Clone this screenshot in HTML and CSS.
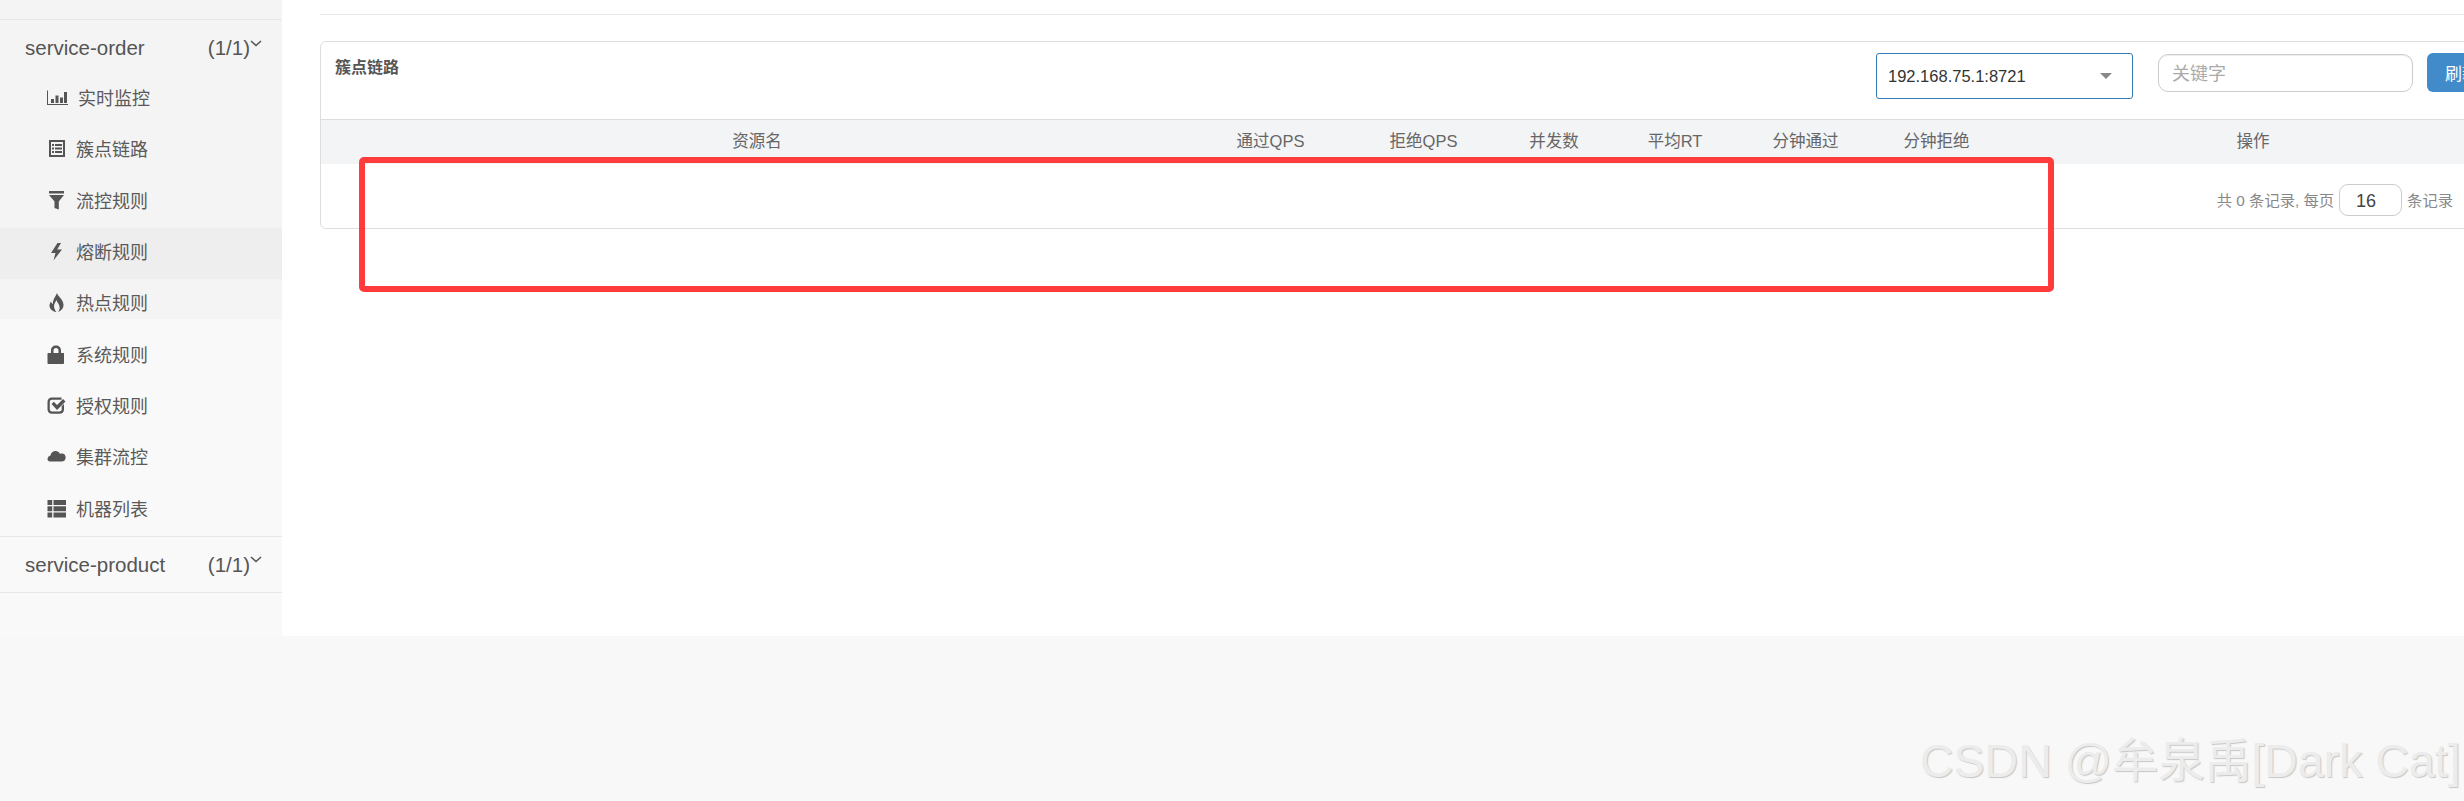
FILE: index.html
```html
<!DOCTYPE html>
<html lang="zh-CN">
<head>
<meta charset="utf-8">
<title>簇点链路</title>
<link rel="stylesheet" href="styles.css">
</head>
<body>
<div class="app">
  <aside class="sidebar">
    <div class="home"><span class="home-text">首页</span></div>
    <div class="app-head">
      <span class="app-name">service-order</span>
      <span class="app-count">(1/1)</span>
      <svg class="chev" viewBox="0 0 12 7"><path d="M1 1l5 4.5L11 1" fill="none" stroke="currentColor" stroke-width="1.6"/></svg>
    </div>
    <ul class="menu">
      <li class="row"><svg class="ico ico-wide" viewBox="0 0 21 19"><path d="M0 2.5h1V16h20v1H0z"/><path d="M4 11h3v4H4zM8.5 7.5h3V15h-3zM13 9.500h3V15h-3zM17 4h3v11h-3z"/></svg><span>实时监控</span></li>
      <li class="row"><svg class="ico" viewBox="0 0 19 19"><path fill-rule="evenodd" d="M2 1h16v17H2zM4 3v13h12V3z"/><path d="M5 5h2v2H5zM8 5h7v2H8zM5 8.500h2v2H5zM8 8.500h7v2H8zM5 12h2v2H5zM8 12h7v2H8z"/></svg><span>簇点链路</span></li>
      <li class="row"><svg class="ico" viewBox="0 0 19 19"><path d="M2 0h15v2.500H2zM2 4h15l-5.200 6.500V18.500L7.500 17V10.500z"/></svg><span>流控规则</span></li>
      <li class="row row-active"><svg class="ico" viewBox="0 0 19 19"><path d="M10.500 1L4 11h4.500L6.500 18.500 15 7.500h-4.800L14 1z"/></svg><span>熔断规则</span></li>
      <li class="row"><svg class="ico" viewBox="0 0 19 19"><path d="M10 0C10.500 3 16 6 16.500 11.500 16.800 15 14 18 11 19 13 16.500 13 14 12 12 11.500 10.500 10 9 9.500 7 8.500 9 7 11 7 13 7 15 8 17.500 9.500 19 5 18.500 2.500 15.500 2.500 12.500 2.500 10.500 3.500 9.500 4 8.500 4.500 10 5 10.500 6 11 5.500 7 8.500 3.500 10 0z"/></svg><span>热点规则</span></li>
      <li class="row"><svg class="ico" viewBox="0 0 19 19"><path fill-rule="evenodd" d="M4 8V5.500C4 2.500 6 .5 9 .5s5 2 5 5V8h2.500c.5 0 .5.300.5.800V18c0 .5-.3 1-1 1H1.500C.8 19 .500 18.500 .500 18V8.800C.5 8.300.8 8 1.300 8zM6.500 8h5V5.500C11.500 4 10.500 3 9 3S6.500 4 6.500 5.500z"/></svg><span>系统规则</span></li>
      <li class="row"><svg class="ico" viewBox="0 0 19 19"><path d="M5 1.500h9.500v2.300H5c-1.500 0-2.200.8-2.200 2.200v7.200c0 1.300.8 2.200 2.200 2.200h7.500c1.300 0 2.200-.9 2.200-2.200v-3l2.300-2.300v5.300c0 3-1.800 4.500-4.500 4.500H5c-3 0-4.500-1.800-4.500-4.500V6C.5 3 2.300 1.500 5 1.500z"/><path d="M4.500 8l2.300-2.300 3.200 3.200 6-6 2.500 2.500-8.500 8.500z"/></svg><span>授权规则</span></li>
      <li class="row"><svg class="ico" viewBox="0 0 19 19"><path d="M.5 12.500c0-2.200 1.300-3.500 3-4 .3-2.800 2.700-4.500 5-4.500 2 0 3.800 1 4.700 3 .7-.3 1-.4 1.800-.4 2 0 3.200 1.300 3.500 3 .500 1.800-.5 5-3.500 5H4c-2 0-3.500-.8-3.500-2.100z"/></svg><span>集群流控</span></li>
      <li class="row"><svg class="ico" viewBox="0 0 19 19"><path d="M.5 1h4.700v5H.5zM6.500 1h12.500v5H6.500zM.5 7.300h4.700v5H.5zM6.500 7.300h12.500v5H6.500zM.5 13.600h4.700v5H.5zM6.500 13.600h12.500v5H6.500z"/></svg><span>机器列表</span></li>
    </ul>
    <div class="app-head app-head-last">
      <span class="app-name">service-product</span>
      <span class="app-count">(1/1)</span>
      <svg class="chev" viewBox="0 0 12 7"><path d="M1 1l5 4.500L11 1" fill="none" stroke="currentColor" stroke-width="1.6"/></svg>
    </div>
  </aside>
  <main class="main">
    <div class="rule"></div>
    <section class="card">
      <header class="card-head">
        <h2 class="card-title">簇点链路</h2>
        <div class="select"><span>192.168.75.1:8721</span><i class="caret"></i></div>
        <div class="search">关键字</div>
        <button class="refresh">刷新</button>
      </header>
      <div class="thead">
        <span>资源名</span><span>通过QPS</span><span>拒绝QPS</span><span>并发数</span><span>平均RT</span><span>分钟通过</span><span>分钟拒绝</span><span>操作</span>
      </div>
      <footer class="pager">
        <span class="pager-text">共 0 条记录, 每页</span>
        <div class="page-size">16</div>
        <span class="pager-text">条记录</span>
      </footer>
    </section>
  </main>
  <div class="annot"></div>
</div>
<div class="watermark">CSDN @牟泉禹[Dark Cat]</div>
</body>
</html>
```
FILE: styles.css
```css
* { box-sizing: border-box; }
html, body { margin: 0; height: 100%; }
body {
  position: relative;
  height: 801px;
  overflow: hidden;
  background: #f8f8f8;
  color: #555;
  font-family: "Liberation Sans", "Noto Sans CJK SC", sans-serif;
}
.app { position: relative; display: flex; height: 636px; background: #fff; }

/* sidebar */
.sidebar {
  flex: 0 0 282px;
  height: 636px;
  background: linear-gradient(#f4f4f4 319px, #f9f9f9 319px);
}
.home {
  display: flex;
  align-items: flex-end;
  height: 20px;
  padding-left: 60px;
  overflow: hidden;
  border-bottom: 1px solid #e7e7e7;
}
.home-text { font-size: 18px; line-height: 24px; margin-bottom: 16px; }
.app-head {
  display: flex;
  align-items: center;
  height: 54px;
  padding: 2px 20px 0 25px;
  font-size: 20.5px;
  color: #555;
}
.app-head-last {
  height: 57px;
  padding-top: 1px;
  border-top: 1px solid #e7e7e7;
  border-bottom: 1px solid #e7e7e7;
}
.app-name { flex: 1; }
.chev { width: 12px; height: 7px; align-self: flex-start; margin-top: 18px; color: #555; }
.menu { list-style: none; margin: 0; padding: 0; }
.row {
  display: flex;
  align-items: center;
  gap: 10px;
  height: 51.33px;
  padding: 0 0 4px 47px;
  font-size: 18px;
  color: #5a5a5a;
}
.row span { margin-bottom: 1px; }
.row-active { background: #eee; }
.ico { flex: 0 0 19px; width: 19px; height: 19px; fill: #555; }
.ico-wide { flex-basis: 21px; width: 21px; }

/* main */
.main { flex: 1; min-width: 0; padding: 14px 0 0 38px; overflow: hidden; }
.rule { height: 1px; background: #e7e7e7; }
.card {
  width: 2191px;
  margin-top: 26px;
  border: 1px solid #ddd;
  border-radius: 6px;
}
.card-head { display: flex; align-items: flex-start; height: 77px; padding-right: 13px; }
.card-title {
  flex: 1;
  margin: 0;
  padding: 15px 0 0 14px;
  font-size: 16px;
  line-height: 22px;
  font-weight: 700;
  color: #555;
}
.select {
  display: flex;
  align-items: center;
  justify-content: space-between;
  width: 257px;
  height: 46px;
  margin-top: 11px;
  padding: 0 20px 0 11px;
  border: 1px solid #337ab7;
  border-radius: 3px;
  font-size: 16.5px;
  color: #333;
}
.caret {
  width: 0;
  height: 0;
  border-left: 6px solid transparent;
  border-right: 6px solid transparent;
  border-top: 6px solid #888;
}
.search {
  display: flex;
  align-items: center;
  width: 255px;
  height: 38px;
  margin: 12px 0 0 25px;
  padding: 0 0 2px 13px;
  border: 1px solid #ccc;
  border-radius: 10px;
  font-size: 18px;
  color: #aaa;
  box-shadow: inset 0 1px 1px rgba(0, 0, 0, .075);
}
.refresh {
  width: 70px;
  height: 39px;
  margin: 11px 0 0 14px;
  padding: 0;
  border: 0;
  border-radius: 6px;
  background: #428bca;
  color: #fff;
  font: inherit;
  font-size: 17px;
}
.thead {
  display: grid;
  grid-template-columns: 872px 155px 151px 110px 132px 129px 133px 500px;
  align-items: center;
  height: 45px;
  padding-bottom: 4px;
  border-top: 1px solid #ddd;
  background: #f3f4f6;
  font-size: 16.5px;
  color: #666;
  text-align: center;
}
.pager {
  display: flex;
  align-items: center;
  justify-content: flex-end;
  gap: 5px;
  height: 64px;
  padding: 8px 57px 0 0;
  font-size: 15.3px;
  color: #888;
}
.pager-text { margin-bottom: 3px; }
.page-size {
  width: 63px;
  height: 32px;
  padding-left: 16px;
  border: 1px solid #ccc;
  border-radius: 9px;
  background: #fff;
  font-size: 18px;
  line-height: 32px;
  color: #444;
}

/* overlays */
.annot {
  position: absolute;
  left: 359px;
  top: 157px;
  width: 1695px;
  height: 135px;
  border: 6px solid #ff3b3b;
  border-radius: 5px;
}
.watermark {
  position: absolute;
  left: 1920px;
  top: 734px;
  font-size: 46.5px;
  line-height: 54px;
  white-space: nowrap;
  color: #ececec;
  text-shadow: 1px 1px 1px #c6c6c6;
}
```
